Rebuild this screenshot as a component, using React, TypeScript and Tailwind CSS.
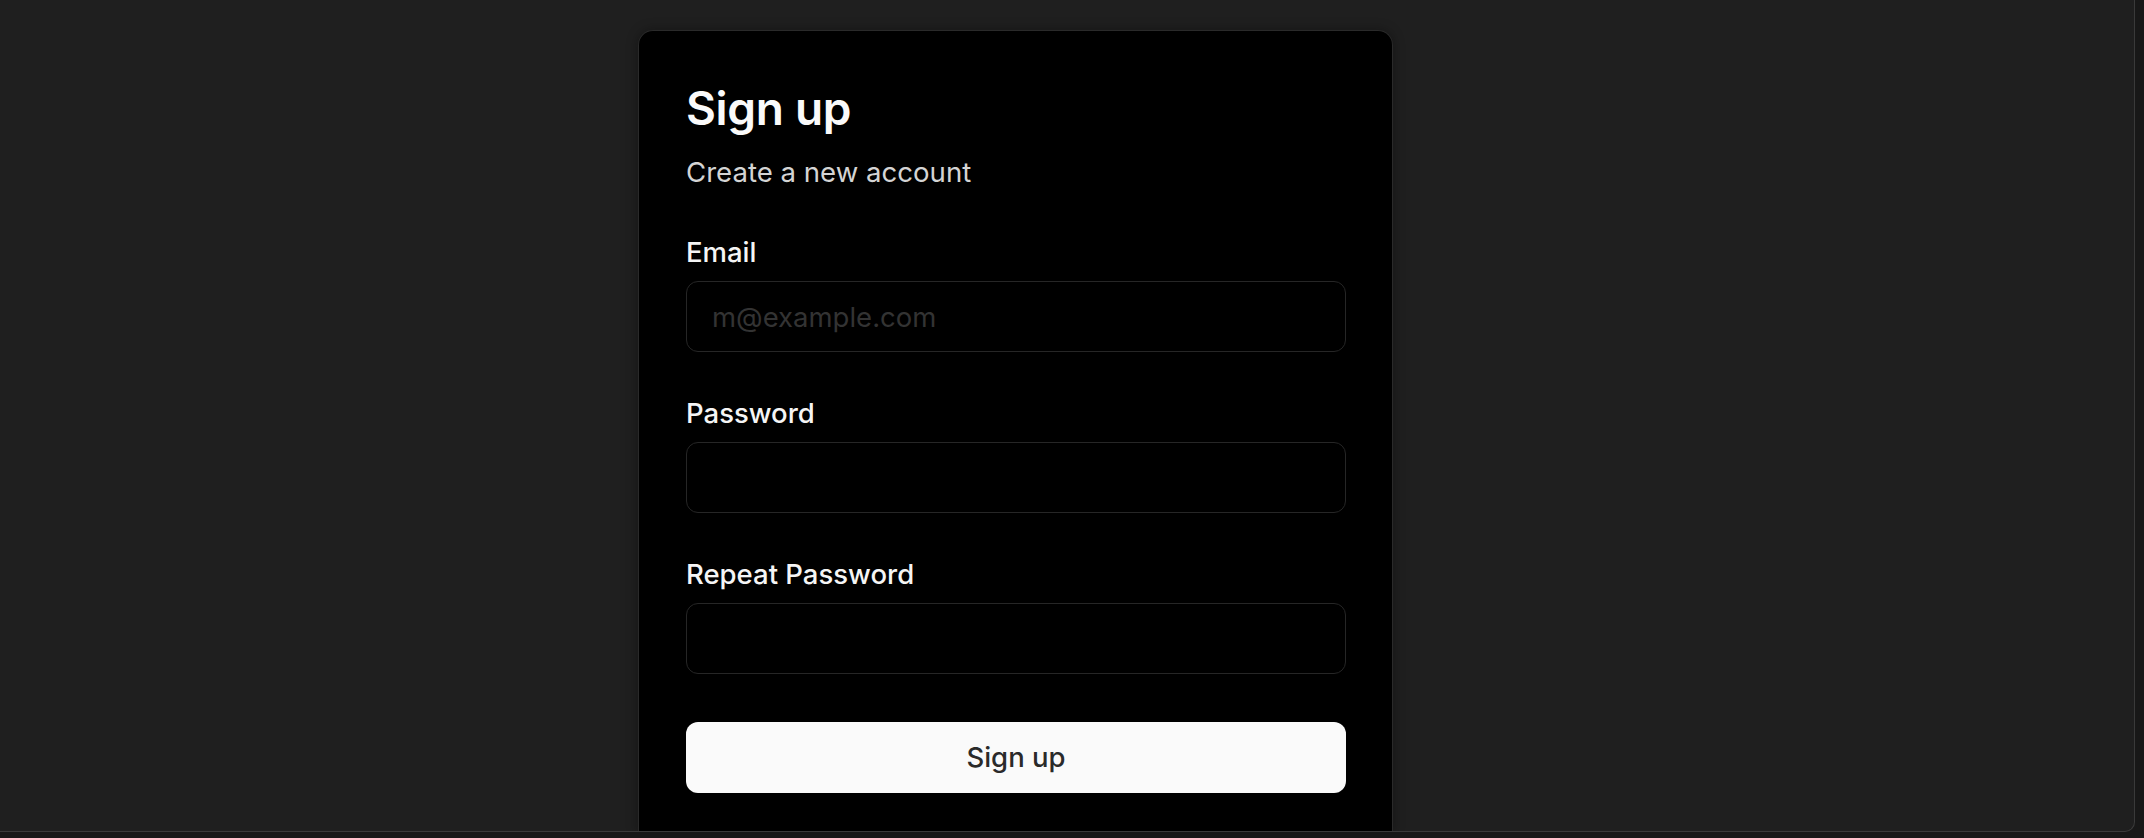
export default function App() {
  return (
    <div className="h-[838px] w-[2144px] overflow-hidden bg-[#181818] font-['Inter','Liberation_Sans',sans-serif]">
      <div className="h-[832px] w-[2135px] overflow-hidden rounded-br-[10px] border-r border-b border-[#3a3a3a] bg-[#1f1f1f] pt-[30px] pl-[638px]">
        <div className="flex h-[802px] w-[755px] flex-col rounded-t-[15px] border border-b-0 border-[#2a2a2a] bg-black pr-[46px] pl-[47px] pt-[54px] shadow-[0_0_12px_rgba(0,0,0,0.35)]">
          <h1 className="text-[46px] leading-[46px] font-semibold tracking-[-0.3px] text-[#fafafa]">
            Sign up
          </h1>
          <p className="mt-[27px] text-[27.6px] leading-[28px] text-[#d4d4d4]">
            Create a new account
          </p>
          <form className="mt-[53px] flex flex-col gap-[48px]">
            <Field label="Email" placeholder="m@example.com" type="email" />
            <Field label="Password" type="password" />
            <Field label="Repeat Password" type="password" />
            <button
              type="button"
              className="h-[71px] w-full rounded-[12px] bg-[#fafafa] text-[27.5px] font-medium text-[#2a2a2a]"
            >
              Sign up
            </button>
          </form>
        </div>
      </div>
    </div>
  )
}

function Field({
  label,
  placeholder,
  type,
}: {
  label: string
  placeholder?: string
  type: string
}) {
  return (
    <div className="flex flex-col gap-[15px]">
      <label className="text-[27.5px] leading-[27px] font-medium text-[#f5f5f5]">
        {label}
      </label>
      <input
        type={type}
        placeholder={placeholder}
        className="h-[71px] w-full rounded-[12px] border border-[#262626] bg-black px-[25px] text-[27.5px] text-white outline-none placeholder:text-[#333333]"
      />
    </div>
  )
}
